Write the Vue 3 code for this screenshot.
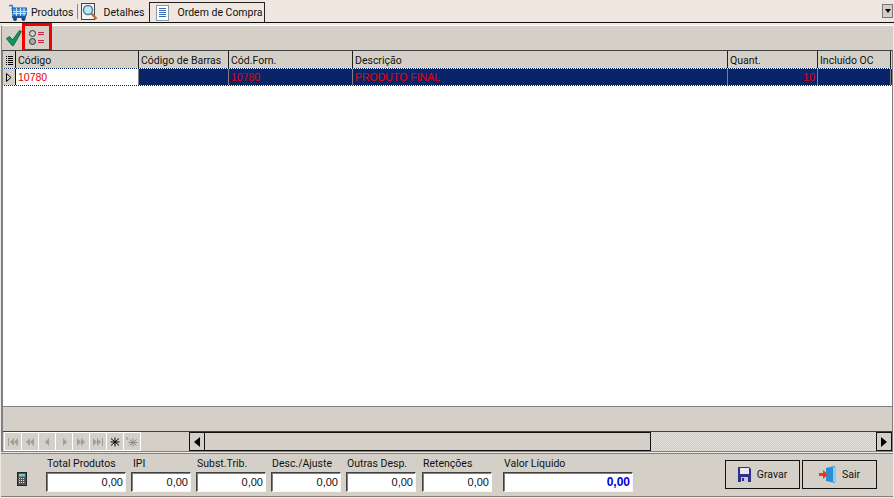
<template>
  <div class="window">
    <div class="tabs">
      <div class="tab">
        <svg class="tab-icon" width="18" height="17" viewBox="0 0 18 17">
          <path d="M0 1.500h3l1 3" fill="none" stroke="#3a7cc8" stroke-width="1.500" />
          <path d="M3 4h15l-1 8H4z" fill="#3f93e0" stroke="#1c5aa8" />
          <path d="M7.500 4v8M11.500 4v8M15 4v8M4 7.500h14M4 9.500h13" stroke="#bfe4fa" />
          <rect x="3" y="12" width="14" height="2" fill="#1c5aa8" />
          <circle cx="6" cy="15" r="2" fill="#18468c" />
          <circle cx="14.500" cy="15" r="2" fill="#18468c" />
        </svg>
        <span>Produtos</span>
      </div>
      <div class="tab-sep"></div>
      <div class="tab tab-details">
        <svg class="tab-icon" width="17" height="18" viewBox="0 0 17 18">
          <rect x="0.500" y="0.500" width="13" height="16" fill="#f4f4f4" stroke="#444" />
          <circle cx="7" cy="7" r="4.500" fill="#bfe6f5" stroke="#4d7f9e" stroke-width="1.500" />
          <path d="M10.500 10.500l5 5.500" stroke="#d8681c" stroke-width="2.500" />
        </svg>
        <span>Detalhes</span>
      </div>
      <div class="tab tab-active">
        <svg class="tab-icon" width="14" height="16" viewBox="0 0 14 16">
          <rect x="0.500" y="0.500" width="12" height="15" fill="#fff" stroke="#8a9ab0" />
          <path d="M3 3.500h7M3 5.500h7M3 7.500h7M3 9.500h7M3 11.500h7" stroke="#3a68b8" />
        </svg>
        <span>Ordem de Compra</span>
      </div>
      <div class="tabs-fill"></div>
      <button class="tabs-menu"><i class="arrow-down"></i></button>
    </div>

    <div class="body">
      <div class="toolbar">
        <svg class="check" width="16" height="16" viewBox="0 0 16 16">
          <path d="M0.500 8.500l3-2 3 3.500 7-9.500 2 1-8 14h-1.500z" fill="#0e9a58" stroke="#0a4f30" stroke-width="0.800" />
        </svg>
        <div class="legend-btn">
          <svg width="17" height="16" viewBox="0 0 17 16">
            <circle cx="3.500" cy="3.500" r="3" fill="#d4d0c8" stroke="#333" />
            <circle cx="3.500" cy="11.500" r="3" fill="#a8a8a4" stroke="#333" />
            <path d="M9 2.500h6M9 4.500h6M9 10.500h6M9 12.500h6" stroke="#d02048" />
          </svg>
        </div>
      </div>

      <div class="grid">
        <div class="row head">
          <div class="ind">
            <svg width="7" height="10" viewBox="0 0 7 10">
              <path d="M0 1.500h1M0 3.500h1M0 5.500h1M0 7.500h1M0 9.500h1M2 1.500h5M2 3.500h5M2 5.500h5M2 7.500h5M2 9.500h5" stroke="#000" />
            </svg>
          </div>
          <div v-for="c in columns" :key="c.label" class="cell" :style="{ width: c.width + 'px' }">{{ c.label }}</div>
        </div>
        <div class="row data">
          <div class="ind ind-row">
            <svg width="6" height="9" viewBox="0 0 6 9">
              <path d="M0.500 0.500l4.500 4-4.500 4z" fill="#d4d0c8" stroke="#000" />
            </svg>
          </div>
          <div class="cell cell-focus" :style="{ width: columns[0].width + 'px' }">10780</div>
          <div class="cell" :style="{ width: columns[1].width + 'px' }"></div>
          <div class="cell" :style="{ width: columns[2].width + 'px' }">10780</div>
          <div class="cell" :style="{ width: columns[3].width + 'px' }">PRODUTO FINAL</div>
          <div class="cell cell-num" :style="{ width: columns[4].width + 'px' }">10</div>
          <div class="cell" :style="{ width: columns[5].width + 'px' }"></div>
        </div>
        <div class="grid-empty"></div>
        <div class="grid-foot"></div>
        <div class="nav">
          <div class="nav-buttons">
            <div v-for="b in navButtons" :key="b.name" class="nav-btn">
              <svg width="12" height="10" viewBox="0 0 12 10">
                <path :d="b.d" :fill="b.color" :stroke="b.stroke || 'none'" />
              </svg>
            </div>
          </div>
          <div class="scroll">
            <div class="scroll-btn"><i class="arrow-left"></i></div>
            <div class="scroll-thumb"></div>
            <div class="scroll-track"></div>
            <div class="scroll-btn"><i class="arrow-right-big"></i></div>
          </div>
        </div>
      </div>

      <div class="footer">
        <svg class="calc" width="10" height="14" viewBox="0 0 10 14">
          <rect x="0.500" y="0.500" width="9" height="13" fill="#555" stroke="#222" />
          <rect x="2" y="2" width="6" height="2.500" fill="#6fd0d0" />
          <path d="M2 6.500h6M2 8.500h6M2 10.500h6" stroke="#ddd" stroke-dasharray="1 1" />
        </svg>
        <div v-for="f in totals" :key="f.label" class="field" :class="f.cls" :style="{ width: f.width + 'px' }">
          <label>{{ f.label }}</label>
          <div class="input" :class="{ 'input-total': f.total }">0,00</div>
        </div>
        <div class="actions">
          <button class="btn">
            <svg width="13" height="15" viewBox="0 0 13 15">
              <path d="M0 0h11l2 2v13H0z" fill="#30308c" />
              <rect x="2" y="1" width="9" height="6" fill="#e8e8f0" />
              <rect x="3" y="10" width="7" height="5" fill="#c8c8d8" />
              <rect x="4" y="11" width="2" height="3" fill="#30308c" />
            </svg>
            <span>Gravar</span>
          </button>
          <button class="btn">
            <svg width="17" height="17" viewBox="0 0 17 17">
              <path d="M7 2l9-2v17l-9-2z" fill="#2490d8" />
              <path d="M14 1h3v15h-3z" fill="#8ccbf0" />
              <path d="M0 7h4V4l5 4.500-5 4.500v-3H0z" fill="#e83828" />
            </svg>
            <span>Sair</span>
          </button>
        </div>
      </div>
    </div>
  </div>
</template>

<script setup>
const columns = [
  { label: 'Código', width: 123 },
  { label: 'Código de Barras', width: 90 },
  { label: 'Cód.Forn.', width: 124 },
  { label: 'Descrição', width: 375 },
  { label: 'Quant.', width: 90 },
  { label: 'Incluído OC', width: 73 },
]

const grey = '#a09e98'
const navButtons = [
  { name: 'first', color: grey, d: 'M1 1h1v8H1zM7 1v8L3 5zM11 1v8L7 5z' },
  { name: 'prior', color: grey, d: 'M6 1v8L2 5zM10 1v8L6 5z' },
  { name: 'prev', color: grey, d: 'M8 1v8L4 5z' },
  { name: 'next', color: grey, d: 'M5 1v8l4-4z' },
  { name: 'fwd', color: grey, d: 'M2 1v8l4-4zM6 1v8l4-4z' },
  { name: 'last', color: grey, d: 'M1 1v8l4-4zM5 1v8l4-4zM10 1h1v8h-1z' },
  { name: 'insert', color: 'none', stroke: '#000', d: 'M6 0.500v9M2 1.500l8 7M10 1.500l-8 7M1.500 5h9' },
  { name: 'insert2', color: 'none', stroke: '#8a8a86', d: 'M7 1.500v8M3.500 2.500l7 6M10.500 2.500l-7 6M2.500 5.500h9M1 0v3' },
]

const totals = [
  { label: 'Total Produtos', width: 80 },
  { label: 'IPI', width: 60, cls: 'label-in' },
  { label: 'Subst.Trib.', width: 70 },
  { label: 'Desc./Ajuste', width: 70 },
  { label: 'Outras Desp.', width: 70 },
  { label: 'Retenções', width: 70, cls: 'wide-gap' },
  { label: 'Valor Líquido', width: 130, total: true, cls: 'total-field' },
]
</script>

<style>
html, body { margin: 0; background: #efe7df; overflow: hidden; }
</style>

<style scoped>
.window {
  width: 894px;
  height: 498px;
  background: #efe7df;
  font-family: Roboto, "Liberation Sans", Arial, sans-serif;
  font-size: 10.500px;
  color: #111;
  display: flex;
  flex-direction: column;
  overflow: hidden;
}

.tabs {
  height: 22px;
  display: flex;
  align-items: flex-end;
  padding-left: 9px;
  flex: none;
}
.tab {
  height: 20px;
  display: flex;
  align-items: center;
  gap: 4px;
  padding-right: 3px;
  white-space: nowrap;
}
.tab-sep { width: 1px; height: 15px; margin: 0 3px 3px 0; background: #888; }
.tab-details { gap: 6px; }
.tab-active {
  width: 116px;
  flex: none;
  margin-left: 2px;
  padding: 0 0 0 6px;
  gap: 7px;
  border: 1px solid #222;
  border-bottom: none;
  box-sizing: border-box;
}
.tabs-fill { flex: 1; }
.tabs-menu {
  width: 11px;
  height: 14px;
  margin: 0 1px 4px 0;
  padding: 0;
  border: 1px solid #777;
  background: #d4d0c8;
  display: flex;
  align-items: center;
  justify-content: center;
}
.arrow-down {
  border-left: 3px solid transparent;
  border-right: 3px solid transparent;
  border-top: 4px solid #000;
}

.body {
  flex: 1;
  border-top: 1px solid #111;
  padding: 2px 1px 1px 1px;
  background: #ede9e3;
  display: flex;
  flex-direction: column;
  min-height: 0;
}

.toolbar {
  height: 25px;
  background: #d4d0c8;
  border-top: 1px solid #fff;
  border-left: 1px solid #888;
  display: flex;
  align-items: center;
  box-sizing: border-box;
  flex: none;
}
.check { margin-left: 4px; }
.legend-btn {
  width: 30px;
  height: 29px;
  margin-top: -1px;
  box-sizing: border-box;
  border: 3px solid #f00000;
  display: flex;
  align-items: center;
  justify-content: center;
  background: #d4d0c8;
}

.grid {
  flex: none;
  height: 402px;
  border: 1px solid #808080;
  border-left-width: 2px;
  border-top-color: #404040;
  background: #fff;
  display: flex;
  flex-direction: column;
  box-sizing: border-box;
}
.row { display: flex; flex: none; }
.head {
  height: 18px;
  background: #d4d0c8;
  border-bottom: 1px solid #111;
  box-sizing: border-box;
}
.ind {
  width: 12px;
  flex: none;
  border-right: 1px solid #111;
  display: flex;
  align-items: center;
  justify-content: center;
}
.cell {
  flex: none;
  box-sizing: border-box;
  border-right: 1px solid #222;
  padding: 0 2px;
  line-height: 19px;
  white-space: nowrap;
  overflow: hidden;
}
.data {
  height: 18px;
  background: #0a2468;
  color: #e80000;
  border-bottom: 1px dotted #fff;
  border-top: 1px dotted #fff;
  box-sizing: border-box;
  margin-top: -1px;
}
.data .cell {
  border-right: 1px solid #808080;
  line-height: 16px;
  font-family: "Liberation Sans", Arial, sans-serif;
  font-size: 10.500px;
}
.ind-row { background: #d4d0c8; }
.data .cell-focus { background: #fff; }
.data .cell-num { text-align: right; }
.grid-empty { flex: 1; background: #fff; border-bottom: 1px solid #808080; }
.grid-foot { height: 24px; flex: none; background: #d4d0c8; border-bottom: 1px solid #404040; }

.nav {
  height: 19px;
  flex: none;
  background: #d4d0c8;
  display: flex;
  align-items: stretch;
}
.nav-buttons {
  margin-left: 1px;
  display: flex;
  gap: 1px;
  background: #fff;
  padding: 1px;
  box-sizing: border-box;
}
.nav-btn {
  width: 16px;
  flex: none;
  background: #d4d0c8;
  display: flex;
  align-items: center;
  justify-content: center;
}
.scroll {
  flex: 1;
  margin-left: 48px;
  display: flex;
  height: 19px;
}
.scroll-btn {
  width: 16px;
  flex: none;
  box-sizing: border-box;
  border: 1px solid #111;
  display: flex;
  align-items: center;
  justify-content: center;
  background: #d4d0c8;
}
.arrow-left {
  border-top: 5px solid transparent;
  border-bottom: 5px solid transparent;
  border-right: 6px solid #000;
}
.arrow-right-big {
  border-top: 5px solid transparent;
  border-bottom: 5px solid transparent;
  border-left: 6px solid #000;
}
.scroll-thumb {
  width: 446px;
  flex: none;
  box-sizing: border-box;
  border: 1px solid #111;
  border-left: none;
  background: #d4d0c8;
}
.scroll-track {
  flex: 1;
  background: repeating-conic-gradient(#e8e6e0 0% 25%, #c8c6c0 0% 50%) 0 0 / 2px 2px;
}

.footer {
  flex: 1;
  margin-top: 1px;
  background: #d4d0c8;
  border-top: 1px solid #808080;
  border-bottom: 1px solid #808080;
  display: flex;
  align-items: flex-start;
  gap: 5px;
  padding-left: 16px;
}
.calc { margin: 18px 14px 0 0; flex: none; }
.field { flex: none; display: flex; flex-direction: column; padding-top: 3px; }
.field label { height: 13px; line-height: 13px; margin-bottom: 2px; white-space: nowrap; padding-left: 1px; }
.label-in label { padding-left: 2px; }
.wide-gap { margin-left: 1px; }
.total-field { margin-left: 6px; }
.input {
  height: 20px;
  box-sizing: border-box;
  background: #fff;
  border: 1px solid;
  border-color: #404040 #f8f8f8 #f8f8f8 #404040;
  box-shadow: inset 1px 1px 0 #808080;
  text-align: right;
  padding-right: 2px;
  line-height: 18px;
  font-family: "Liberation Sans", Arial, sans-serif;
  font-size: 11px;
}
.input-total { color: #0000e0; font-weight: 700; font-size: 12px; }
.actions {
  margin-left: auto;
  margin-right: 16px;
  margin-top: 6px;
  display: flex;
  gap: 2px;
}
.btn {
  width: 75px;
  height: 29px;
  box-sizing: border-box;
  background: #d4d0c8;
  border: 1px solid #111;
  font: inherit;
  display: flex;
  align-items: center;
  justify-content: center;
  gap: 6px;
  padding: 0;
  color: #111;
}
</style>
